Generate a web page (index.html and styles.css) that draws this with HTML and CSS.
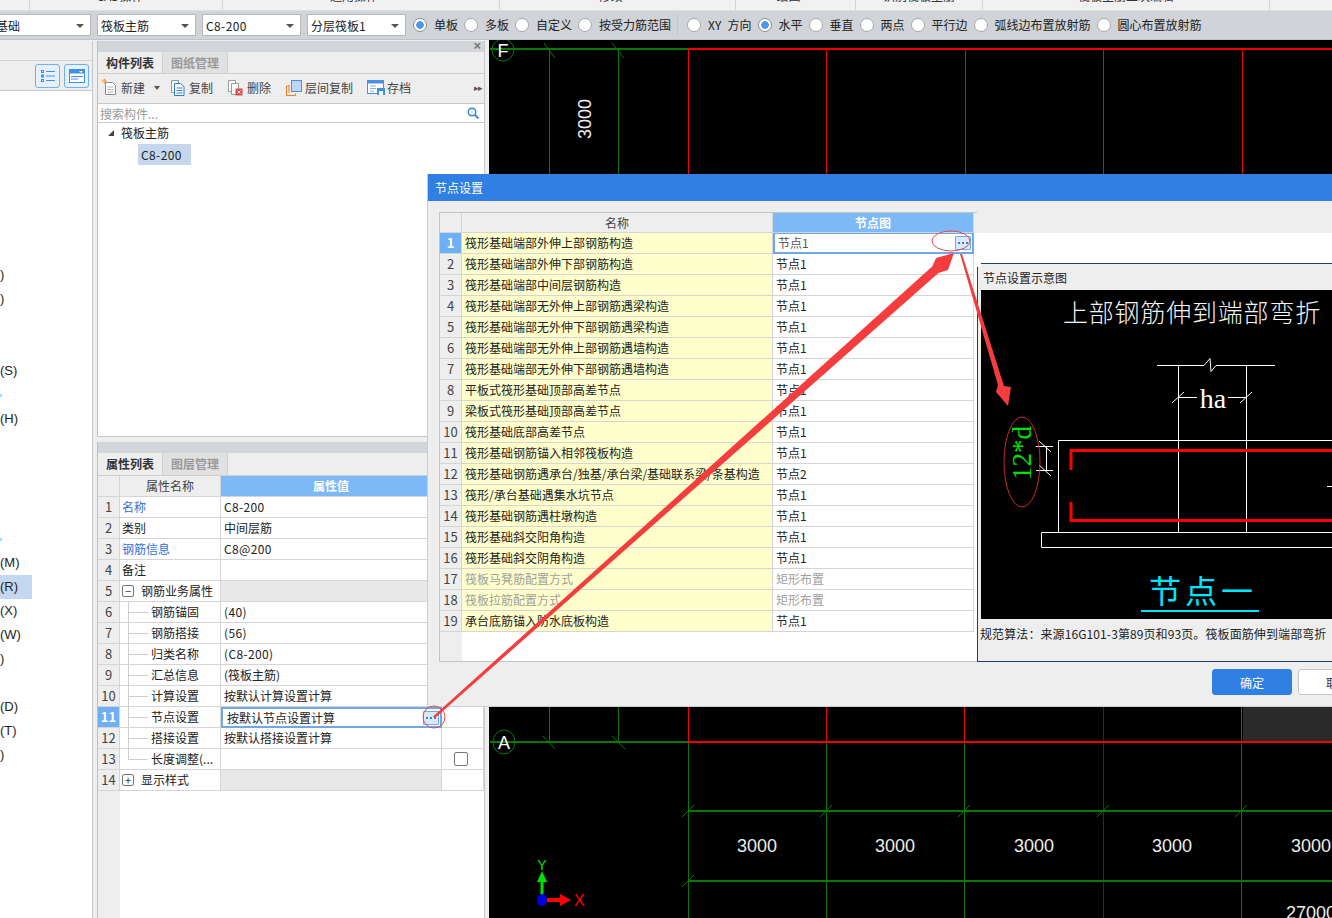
FILE: index.html
```html
<!DOCTYPE html>
<html lang="zh">
<head>
<meta charset="utf-8">
<title>节点设置</title>
<link rel="stylesheet" href="styles.css">
</head>
<body>
<div class="app">
  <div class="ribbon">
    <div class="rib rib-a">CAD操作</div>
    <div class="rib rib-b">通用操作</div>
    <div class="rib rib-c">修改</div>
    <div class="rib rib-d">绘图</div>
    <div class="rib rib-e">识别筏板主筋</div>
    <div class="rib rib-f">筏板主筋二次编辑</div>
    <div class="rib rib-g"></div>
  </div>

  <div class="toolbar">
    <div class="select sel-first">基础</div>
    <div class="select">筏板主筋</div>
    <div class="select sel-lt">C8-200</div>
    <div class="select">分层筏板1</div>
    <div class="radios">
      <div class="radio on">单板</div>
      <div class="radio">多板</div>
      <div class="radio">自定义</div>
      <div class="radio">按受力筋范围</div>
      <div class="vsep"></div>
      <div class="radio radio-xy">XY 方向</div>
      <div class="radio on">水平</div>
      <div class="radio">垂直</div>
      <div class="radio">两点</div>
      <div class="radio">平行边</div>
      <div class="radio">弧线边布置放射筋</div>
      <div class="radio">圆心布置放射筋</div>
    </div>
  </div>

  <div class="main">
    <aside class="left">
      <div class="left-head"></div>
      <div class="left-tools">
        <button class="view-btn"><svg width="14" height="14" viewBox="0 0 14 14"><g fill="none" stroke="#3f8fe6"><rect x="0.5" y="1.5" width="2" height="2"/><rect x="0.5" y="6" width="2" height="2"/><rect x="0.5" y="10.5" width="2" height="2"/><path d="M5 2.5h9M5 7h9M5 11.5h9"/></g></svg></button>
        <button class="view-btn"><svg width="16" height="14" viewBox="0 0 16 14"><rect x="0.5" y="0.5" width="15" height="13" fill="#fff" stroke="#3f8fe6"/><rect x="0.5" y="0.5" width="15" height="4" fill="#3f8fe6"/><path d="M2 7.5h12M2 10h7" stroke="#3f8fe6"/><path d="M10 2h4l-2 2z" fill="#fff"/></svg></button>
      </div>
      <div class="left-list">
        <div class="li"></div><div class="li"></div><div class="li"></div><div class="li"></div><div class="li"></div><div class="li"></div><div class="li"></div>
        <div class="li">)</div><div class="li">)</div><div class="li"></div><div class="li"></div>
        <div class="li">(S)</div><div class="li"><span class="dot"></span></div><div class="li">(H)</div>
        <div class="li"></div><div class="li"></div><div class="li"></div><div class="li"></div>
        <div class="li"><span class="dot"></span></div>
        <div class="li">(M)</div><div class="li sel">(R)</div><div class="li">(X)</div><div class="li">(W)</div><div class="li">)</div>
        <div class="li"></div><div class="li">(D)</div><div class="li">(T)</div><div class="li">)</div>
      </div>
    </aside>

    <section class="mid">
      <div class="panel panel-top">
        <div class="panel-title"><span class="close">×</span></div>
        <div class="tabs"><div class="tab active">构件列表</div><div class="tab">图纸管理</div></div>
        <div class="cmds">
          <div class="cmd cmd-new"><svg width="15" height="17" viewBox="0 0 15 17"><path d="M3.5 3.5h7l3 3v9h-10z" fill="#fff" stroke="#8c8c8c"/><path d="M5.5 8h6M5.5 10.5h6M5.5 13h6" stroke="#b5b5b5"/><path d="M0 2h5M2.5 0v5" stroke="#f28a1e" stroke-width="1.6" stroke-dasharray="1 .6"/></svg>新建<span class="caret"></span></div>
          <div class="cmd cmd-copy"><svg width="14" height="16" viewBox="0 0 14 16"><path d="M.5.5h7v12h-7z" fill="#fff" stroke="#7f9cbc"/><path d="M3.5 3.5h6l3.5 3v9H3.5z" fill="#fff" stroke="#2f79c9"/><path d="M5.5 8h6M5.5 10.5h6M5.5 13h6" stroke="#2f79c9"/></svg>复制</div>
          <div class="cmd cmd-del"><svg width="15" height="16" viewBox="0 0 15 16"><path d="M.5.5h7v11h-7z" fill="#fff" stroke="#999"/><path d="M3.5 3.5h7v11h-7z" fill="#fff" stroke="#999"/><rect x="7.5" y="8.5" width="7" height="7" fill="#e0494b"/><path d="M9.5 10.5l3 3M12.500 10.500l-3 3" stroke="#fff"/></svg>删除</div>
          <div class="cmd cmd-floor"><svg width="16" height="16" viewBox="0 0 16 16"><rect x="5.500" y=".5" width="10" height="11" fill="#bcd8f8" stroke="#4a90e2"/><path d="M.5 15.500V6h3M.5 15.500h9v-2M3 13V5" fill="none" stroke="#ee7d22"/></svg>层间复制</div>
          <div class="cmd cmd-save"><svg width="18" height="15" viewBox="0 0 18 15"><rect x=".5" y=".5" width="16" height="13" fill="#fff" stroke="#4a90e2"/><rect x=".5" y=".5" width="16" height="3" fill="#4a90e2"/><path d="M3 6h6M3 8.500h6M3 11h4" stroke="#7fb0e8"/><rect x="10" y="8" width="8" height="7" fill="#3f8fe6"/><rect x="12" y="11" width="4" height="4" fill="#fff"/></svg>存档</div>
          <span class="more">▸▸</span>
        </div>
        <div class="search"><span>搜索构件...</span><svg width="12" height="12" viewBox="0 0 12 12"><circle cx="5" cy="5" r="3.800" fill="none" stroke="#2f86d6" stroke-width="1.500"/><path d="M8 8l3.500 3.500" stroke="#2f86d6" stroke-width="1.800"/></svg></div>
        <div class="tree">
          <div class="tree-root"><span class="tri"></span>筏板主筋</div>
          <div class="tree-leaf">C8-200</div>
        </div>
      </div>

      <div class="panel panel-bottom">
        <div class="panel-title"></div>
        <div class="tabs tabs-tall"><div class="tab active">属性列表</div><div class="tab">图层管理</div></div>
        <div class="ptable">
          <div class="pr phead"><div class="c n"></div><div class="c hn">属性名称</div><div class="c hv">属性值</div><div class="c x"></div></div>
          <div class="pr"><div class="c n">1</div><div class="c name link">名称</div><div class="c lt">C8-200</div><div class="c x"></div></div>
          <div class="pr"><div class="c n">2</div><div class="c name">类别</div><div class="c">中间层筋</div><div class="c x"></div></div>
          <div class="pr"><div class="c n">3</div><div class="c name link">钢筋信息</div><div class="c lt">C8@200</div><div class="c x"></div></div>
          <div class="pr"><div class="c n">4</div><div class="c name">备注</div><div class="c"></div><div class="c x"></div></div>
          <div class="pr"><div class="c n">5</div><div class="c name grp"><span class="box">−</span>钢筋业务属性</div><div class="c shade"></div><div class="c x shade"></div></div>
          <div class="pr"><div class="c n">6</div><div class="c name child">钢筋锚固</div><div class="c lt">(40)</div><div class="c x"></div></div>
          <div class="pr"><div class="c n">7</div><div class="c name child">钢筋搭接</div><div class="c lt">(56)</div><div class="c x"></div></div>
          <div class="pr"><div class="c n">8</div><div class="c name child">归类名称</div><div class="c lt">(C8-200)</div><div class="c x"></div></div>
          <div class="pr"><div class="c n">9</div><div class="c name child">汇总信息</div><div class="c">(筏板主筋)</div><div class="c x"></div></div>
          <div class="pr"><div class="c n">10</div><div class="c name child">计算设置</div><div class="c">按默认计算设置计算</div><div class="c x"></div></div>
          <div class="pr"><div class="c n cur">11</div><div class="c name child">节点设置</div><div class="c edit">按默认节点设置计算<span class="dots"></span></div><div class="c x"></div></div>
          <div class="pr"><div class="c n">12</div><div class="c name child">搭接设置</div><div class="c">按默认搭接设置计算</div><div class="c x"></div></div>
          <div class="pr"><div class="c n">13</div><div class="c name child last">长度调整(...</div><div class="c"></div><div class="c x"><span class="check"></span></div></div>
          <div class="pr"><div class="c n">14</div><div class="c name grp"><span class="box">+</span>显示样式</div><div class="c shade"></div><div class="c x"></div></div>
          <div class="pblank"><div class="n-fill"></div></div>
        </div>
      </div>
    </section>

    <section class="canvas">
      <svg class="cad" width="843" height="878" viewBox="489 40 843 878">
        <g class="g-line">
          <path d="M549.500 49V174M618.500 49V174M544 43l11 15M612 43l12 15"/>
          <path d="M549.500 707V742M618.500 707V742M543 736l12 13M612 736l13 13"/>
          <path d="M688.500 742V918M826.500 742V918M964.500 742V918M1241.500 742V918"/>
          <path class="faint" d="M1103.500 742V918"/>
          <path class="thick" d="M490 49H688M490 742H688M688 811H1332M688 881H1332"/>
          <path d="M682 817l12-12M820 817l12-12M958 817l12-12M1097 817l12-12M1235 817l12-12M682 887l12-12"/>
          <circle cx="503" cy="50" r="11"/><ellipse cx="504" cy="742" rx="11" ry="12"/>
        </g>
        <g class="r-line">
          <path class="thick" d="M688 49H1332M688 742H1332"/>
          <path d="M688.500 49V174M826.500 49V174M965.500 49V174M1103.500 49V174M1242.500 49V174"/>
          <path d="M688.500 707V742M826.500 707V742M964.500 707V742M1241.500 707V742"/>
          <path class="faint" d="M1103.500 707V742"/>
        </g>
        <rect x="1243" y="707" width="89" height="34" fill="#2a2a2a"/>
        <text class="lab" x="503" y="57" text-anchor="middle">F</text>
        <text class="lab" x="504" y="749" text-anchor="middle">A</text>
        <text class="dim" x="0" y="0" transform="translate(591 119) rotate(-90)" text-anchor="middle">3000</text>
        <text class="dim" x="757" y="852" text-anchor="middle">3000</text>
        <text class="dim" x="895" y="852" text-anchor="middle">3000</text>
        <text class="dim" x="1034" y="852" text-anchor="middle">3000</text>
        <text class="dim" x="1172" y="852" text-anchor="middle">3000</text>
        <text class="dim" x="1311" y="852" text-anchor="middle">3000</text>
        <text class="dim" x="1286" y="919">27000</text>
        <path d="M542 900V880" stroke="#00e000" stroke-width="3"/>
        <path d="M542 871l-5 11h10z" fill="#00e000"/>
        <path d="M547 900h13" stroke="#f00" stroke-width="4"/>
        <path d="M571 900l-11-6v12z" fill="#f00"/>
        <ellipse cx="542" cy="900" rx="5" ry="6" fill="#0000e0"/>
        <text class="axis-y" x="542" y="870" text-anchor="middle">Y</text>
        <text class="axis-x" x="574" y="906">X</text>
      </svg>
    </section>
  </div>

  <div class="dialog">
    <div class="d-title">节点设置</div>
    <div class="d-body">
      <div class="d-main">
        <div class="ntable">
          <div class="nr nhead"><div class="c n"></div><div class="c hn">名称</div><div class="c hv">节点图</div><div class="hfill"></div></div>
          <div class="nr"><div class="c n cur">1</div><div class="c y">筏形基础端部外伸上部钢筋构造</div><div class="c edit2">节点1<span class="dots"></span></div></div>
          <div class="nr"><div class="c n">2</div><div class="c y">筏形基础端部外伸下部钢筋构造</div><div class="c">节点1</div></div>
          <div class="nr"><div class="c n">3</div><div class="c y">筏形基础端部中间层钢筋构造</div><div class="c">节点1</div></div>
          <div class="nr"><div class="c n">4</div><div class="c y">筏形基础端部无外伸上部钢筋遇梁构造</div><div class="c">节点1</div></div>
          <div class="nr"><div class="c n">5</div><div class="c y">筏形基础端部无外伸下部钢筋遇梁构造</div><div class="c">节点1</div></div>
          <div class="nr"><div class="c n">6</div><div class="c y">筏形基础端部无外伸上部钢筋遇墙构造</div><div class="c">节点1</div></div>
          <div class="nr"><div class="c n">7</div><div class="c y">筏形基础端部无外伸下部钢筋遇墙构造</div><div class="c">节点1</div></div>
          <div class="nr"><div class="c n">8</div><div class="c y">平板式筏形基础顶部高差节点</div><div class="c">节点1</div></div>
          <div class="nr"><div class="c n">9</div><div class="c y">梁板式筏形基础顶部高差节点</div><div class="c">节点1</div></div>
          <div class="nr"><div class="c n">10</div><div class="c y">筏形基础底部高差节点</div><div class="c">节点1</div></div>
          <div class="nr"><div class="c n">11</div><div class="c y">筏形基础钢筋锚入相邻筏板构造</div><div class="c">节点1</div></div>
          <div class="nr"><div class="c n">12</div><div class="c y">筏形基础钢筋遇承台/独基/承台梁/基础联系梁/条基构造</div><div class="c">节点2</div></div>
          <div class="nr"><div class="c n">13</div><div class="c y">筏形/承台基础遇集水坑节点</div><div class="c">节点1</div></div>
          <div class="nr"><div class="c n">14</div><div class="c y">筏形基础钢筋遇柱墩构造</div><div class="c">节点1</div></div>
          <div class="nr"><div class="c n">15</div><div class="c y">筏形基础斜交阳角构造</div><div class="c">节点1</div></div>
          <div class="nr"><div class="c n">16</div><div class="c y">筏形基础斜交阴角构造</div><div class="c">节点1</div></div>
          <div class="nr off"><div class="c n">17</div><div class="c y">筏板马凳筋配置方式</div><div class="c">矩形布置</div></div>
          <div class="nr off"><div class="c n">18</div><div class="c y">筏板拉筋配置方式</div><div class="c">矩形布置</div></div>
          <div class="nr"><div class="c n">19</div><div class="c y">承台底筋锚入防水底板构造</div><div class="c">节点1</div></div>
          <div class="nblank"><div class="n-fill"></div></div>
        </div>
        <div class="d-right">
          <div class="strip"></div>
          <div class="white"></div>
          <div class="topline"></div>
          <div class="gbox">
            <div class="gtitle">节点设置示意图</div>
            <svg class="pic" width="351" height="329" viewBox="981 290 351 329">
              <rect x="981" y="290" width="351" height="329" fill="#000"/>
              <text class="p-title" x="1063" y="322">上部钢筋伸到端部弯折</text>
              <g class="w-line">
                <path d="M1157 365.500H1204l6-7 1 13 5-6h59"/>
                <path d="M1178.500 365V532M1246.500 365V532"/>
                <path d="M1178 397.500h19M1228 397.500h18M1172 403l12-11M1240 403l12-11"/>
                <path d="M1058.500 532V440.500H1332M1041.500 532.500H1332M1041.500 532.500v15H1332"/>
                <path d="M1036 446.500h17M1036 470.500h17M1046.500 446v24M1039 441l12 11M1039 465l12 11M1327 486.500h5"/>
              </g>
              <text class="p-ha" x="1213" y="408" text-anchor="middle">ha</text>
              <path class="rebar" d="M1071 470V450.500H1332M1071 502V520.500H1332"/>
              <text class="p-d" transform="translate(1031 480) rotate(-90)">12*d</text>
              <text class="p-node" x="1149" y="603">节点一</text>
              <rect x="1141" y="610" width="118" height="2" fill="#00e5ff"/>
            </svg>
            <div class="gnote">规范算法：来源16G101-3第89页和93页。筏板面筋伸到端部弯折</div>
          </div>
        </div>
      </div>
      <div class="d-foot"><button class="btn primary">确定</button><button class="btn">取消</button></div>
    </div>
  </div>

  <svg class="marks" width="1332" height="918" viewBox="0 0 1332 918">
    <g fill="#f53d3d">
      <path d="M433 716.500L932.400 266.300 936 258 954 253 948 270 938.400 273 435 718z"/>
      <path d="M960 254L998 385 996 392 1008 406 1011 387 1004 386 962 254z"/>
    </g>
    <g fill="none" stroke="#e8474a">
      <ellipse cx="951" cy="241" rx="19" ry="10"/>
      <circle cx="434" cy="717" r="11"/>
    </g>
    <ellipse cx="1022" cy="462" rx="18" ry="45" fill="none" stroke="#c52b2b"/>
  </svg>
</div>
</body>
</html>
```

FILE: styles.css
```css
*, *::before, *::after { box-sizing: border-box; }
html, body { margin: 0; padding: 0; }
body {
  font-family: "Noto Sans CJK SC", "Liberation Sans", sans-serif;
  font-size: 12px;
  color: #222;
  background: #eee;
}
.app {
  position: relative;
  width: 1332px;
  height: 918px;
  overflow: hidden;
  display: flex;
  flex-direction: column;
  background: #eee;
}

/* ribbon */
.ribbon {
  height: 11px;
  display: flex;
  background: #f1f1f1;
  border-bottom: 1px solid #dcdfe2;
  flex: none;
}
.rib {
  height: 10px;
  overflow: hidden;
  display: flex;
  align-items: flex-end;
  justify-content: center;
  padding-bottom: 5px;
  border-right: 1px solid #d4d4d4;
  font-size: 12px;
  line-height: 18px;
  color: #333;
  flex: none;
}
.rib-a { width: 194px; margin-left: 29px; border-left: 1px solid #d4d4d4; padding-right: 12px; }
.rib-b { width: 277px; padding-right: 14px; }
.rib-c { width: 236px; padding-right: 14px; }
.rib-d { width: 120px; padding-right: 14px; }
.rib-e { width: 127px; }
.rib-f { width: 287px; }
.rib-g { width: 62px; border-right: 0; }

/* toolbar */
.toolbar {
  height: 29px;
  flex: none;
  display: flex;
  align-items: center;
  gap: 6px;
  background: #d0d3d7;
  border-bottom: 1px solid #c0c3c7;
  padding-bottom: 1px;
}
.select {
  position: relative;
  width: 99px;
  height: 22px;
  background: #fff;
  border: 1px solid #b8b8b8;
  padding-left: 3px;
  line-height: 21px;
  white-space: nowrap;
  overflow: hidden;
}
.select::after {
  content: "";
  position: absolute;
  right: 6px;
  top: 9px;
  border: 4px solid transparent;
  border-top: 4px solid #555;
  border-bottom: 0;
}
.sel-first { margin-left: -11px; width: 102px; text-indent: 3px; }
.sel-lt { letter-spacing: .4px; }
.radios {
  display: flex;
  align-items: center;
  gap: 6px;
  margin-left: 1px;
}
.radio {
  display: flex;
  align-items: center;
  gap: 7px;
  white-space: nowrap;
  line-height: 16px;
}
.radio-xy { word-spacing: 3.500px; }
.radio::before {
  content: "";
  width: 14px;
  height: 14px;
  border-radius: 50%;
  background: #fff;
  border: 1px solid #a9a9a9;
  flex: none;
}
.radio.on::before {
  background: radial-gradient(circle, #4a97f2 0 3.500px, #fff 4px);
  border-color: #8e8e8e;
}
.vsep { width: 1px; height: 20px; background: #c2c5c9; margin: 0 3px 0 0; }

/* main */
.main { flex: 1; display: flex; min-height: 0; }
.left {
  width: 93px;
  flex: none;
  display: flex;
  flex-direction: column;
  border-right: 1px solid #c8c8c8;
  margin-top: 1px;
}
.left-head { height: 20px; background: #eee; border-bottom: 1px solid #d4d4d4; flex: none; }
.left-tools {
  height: 30px;
  display: flex;
  justify-content: flex-end;
  gap: 4px;
  padding: 3px 3px 0 0;
  border-bottom: 1px solid #c9c9c9;
  flex: none;
}
.view-btn {
  width: 25px;
  height: 24px;
  padding: 0;
  background: #e7f1fd;
  border: 1px solid #6fb0f0;
  border-radius: 3px;
  display: flex;
  align-items: center;
  justify-content: center;
}
.left-list { flex: 1; background: #fff; padding-top: 4px; font-size: 13px; font-family: "Liberation Sans", sans-serif; }
.li { height: 24px; line-height: 24px; width: 91px; display: flow-root; }
.li.sel { background: #c5d7ef; width: 32px; }
.dot { display: block; width: 2px; height: 3px; margin-top: 11px; background: #8fe8f4; }

.mid {
  width: 388px;
  flex: none;
  margin-left: 4px;
  display: flex;
  flex-direction: column;
  gap: 5px;
  margin-top: 1px;
}
.panel {
  border-left: 1px solid #c0c0c0;
  border-right: 1px solid #c8c8c8;
  background: #fff;
  display: flex;
  flex-direction: column;
}
.panel-top { height: 396px; border-bottom: 1px solid #c8c8c8; flex: none; }
.panel-bottom { flex: 1; min-height: 0; }
.panel-title {
  height: 11px;
  flex: none;
  background: #d2d5da;
  position: relative;
}
.close {
  position: absolute;
  right: 3px;
  top: -2px;
  font-size: 13px;
  line-height: 14px;
  color: #777;
  font-family: "Liberation Sans", sans-serif;
  font-weight: bold;
}
.tabs {
  height: 22px;
  flex: none;
  display: flex;
  background: #eee;
  border-bottom: 1px solid #cfcfcf;
}
.tabs-tall { height: 23px; }
.tab {
  width: 65px;
  text-align: center;
  line-height: 21px;
  color: #999;
  background: #e1e1e1;
  border-right: 1px solid #cfcfcf;
  font-weight: bold;
}
.tab.active { background: #eee; color: #333; }
.cmds {
  height: 30px;
  flex: none;
  position: relative;
  display: flex;
  align-items: center;
  background: #eee;
  border-bottom: 1px solid #c8c8c8;
  padding: 0 0 2px 4px;
  color: #444;
}
.cmd { display: flex; align-items: center; gap: 4px; flex: none; white-space: nowrap; }
.cmd-new { width: 69px; }
.cmd-copy { width: 57px; }
.cmd-del { width: 58px; }
.cmd-floor { width: 81px; gap: 3px; }
.cmd-save { gap: 2px; }
.caret {
  margin-left: 5px;
  border: 3px solid transparent;
  border-top: 4px solid #555;
  border-bottom: 0;
}
.more { position: absolute; right: 2px; font-size: 9px; color: #555; letter-spacing: -1px; }
.search {
  height: 19px;
  flex: none;
  display: flex;
  align-items: center;
  justify-content: space-between;
  padding: 0 5px 0 2px;
  color: #999;
  border-bottom: 1px solid #c8c8c8;
}
.tree { flex: 1; color: #222; }
.tree-root { height: 21px; line-height: 19px; padding-left: 23px; position: relative; }
.tri {
  position: absolute;
  left: 10px;
  top: 7px;
  border-left: 6px solid transparent;
  border-bottom: 6px solid #444;
}
.tree-leaf {
  margin-left: 40px;
  width: 53px;
  height: 21px;
  line-height: 21px;
  padding-left: 3px;
  letter-spacing: .4px;
  background: #c5d7ef;
}

/* shared grid cells */
.c {
  border-right: 1px solid #d5d5d5;
  border-bottom: 1px solid #d5d5d5;
  padding-left: 3px;
  line-height: 20px;
  white-space: nowrap;
  overflow: hidden;
  position: relative;
}
.c.lt { letter-spacing: .35px; }
.c.n {
  background: #eee;
  text-align: center;
  padding: 0;
  color: #444;
  font-size: 13px;
}
.c.n.cur { background: #6fb0f5; color: #fff; font-weight: bold; }
.c.hn { background: #eee; text-align: center; color: #444; padding: 0; }
.c.hv { background: #7db8f7; text-align: center; color: #fff; font-weight: bold; padding: 0; }
.dots {
  position: absolute;
  width: 16px;
  height: 14px;
  background: #d9e9fc;
  border: 1px solid #6fa8ea;
  border-radius: 1px;
}
.dots::before {
  content: "";
  position: absolute;
  left: 6px;
  top: 5px;
  width: 2px;
  height: 2px;
  background: #3f7fcf;
  box-shadow: -4px 0 0 #3f7fcf, 4px 0 0 #3f7fcf;
}

/* property table */
.ptable { flex: 1; display: flex; flex-direction: column; min-height: 0; }
.pr {
  display: grid;
  grid-template-columns: 22px 101px 221px 42px;
  height: 21px;
  flex: none;
}
.c.name { padding-left: 2px; }
.c.link { color: #2f6fe0; }
.c.grp { padding-left: 21px; }
.c.child { padding-left: 31px; }
.c.child::before {
  content: "";
  position: absolute;
  left: 8px;
  top: 0;
  bottom: 0;
  width: 1px;
  background: #cfcfcf;
}
.c.child::after {
  content: "";
  position: absolute;
  left: 8px;
  top: 10px;
  width: 20px;
  height: 1px;
  background: #cfcfcf;
}
.c.child.last::before { bottom: 10px; }
.box {
  position: absolute;
  left: 2px;
  top: 4px;
  width: 12px;
  height: 12px;
  border: 1px solid #777;
  border-radius: 2px;
  font-size: 11px;
  line-height: 10px;
  text-align: center;
  color: #333;
}
.shade { background: #e8e8e8; }
.edit { border: 2px solid #6fa8ea; padding-left: 4px; line-height: 17px; }
.edit .dots { right: 1px; top: 2px; }
.check {
  position: absolute;
  left: 12px;
  top: 3px;
  width: 14px;
  height: 14px;
  border: 1px solid #777;
  border-radius: 2px;
  background: #fff;
}
.pblank { flex: 1; }
.n-fill { width: 22px; height: 100%; background: #eee; }

/* dialog */
.dialog {
  position: absolute;
  left: 427px;
  top: 174px;
  width: 960px;
  height: 533px;
  background: #eee;
  border-left: 1px solid #c8cdd8;
  border-bottom: 1px solid #c8cdd8;
  display: flex;
  flex-direction: column;
}
.d-title {
  height: 27px;
  flex: none;
  background: #2f80e2;
  color: #fff;
  line-height: 27px;
  padding-left: 7px;
  font-size: 12px;
}
.d-body { flex: 1; padding: 11px 0 0 11px; display: flex; flex-direction: column; }
.d-main { display: flex; height: 450px; flex: none; }
.ntable {
  width: 538px;
  flex: none;
  background: #fff;
  border: 1px solid #c4c4c4;
  border-right: 0;
  display: flex;
  flex-direction: column;
}
.nr {
  display: grid;
  grid-template-columns: 22px 311px 201px;
  height: 21px;
  flex: none;
}
.nhead { height: 20px; grid-template-columns: 22px 311px 201px 3px; background: #eee; }
.hfill { background: #eee; }
.nhead .c { line-height: 19px; }
.c.y { background: #ffffcb; padding-left: 3px; }
.off .c { color: #a0a0a0; }
.off .c.n { color: #444; }
.edit2 { border: 2px solid #6fa8ea; border-top-width: 1px; padding-left: 3px; line-height: 18px; color: #555; }
.edit2 .dots { right: 1px; top: 2px; }
.nblank { flex: 1; }
.d-right { flex: 1; background: #fff; display: flex; flex-direction: column; min-width: 0; }
.strip { height: 21px; background: #eee; flex: none; }
.white { height: 30px; flex: none; }
.topline { height: 4px; margin-left: 4px; border-top: 1px solid #1f3f70; background: #eee; flex: none; }
.gbox {
  flex: 1;
  background: #eee;
  border-left: 1px solid #1f3f70;
  border-bottom: 1px solid #1f3f70;
  padding-left: 3px;
  display: flex;
  flex-direction: column;
}
.gtitle { height: 23px; line-height: 22px; padding-left: 2px; color: #222; flex: none; }
.pic { display: block; flex: none; }
.gnote { margin-left: -1px; line-height: 30px; white-space: nowrap; color: #222; letter-spacing: .1px; }
.d-foot { display: flex; gap: 6px; padding: 7px 0 0 773px; }
.btn {
  width: 80px;
  height: 26px;
  padding: 0;
  font: inherit;
  background: #fff;
  border: 1px solid #c8c8c8;
  border-radius: 3px;
  color: #333;
}
.btn.primary { background: #2f80e2; border-color: #2f80e2; color: #fff; }

/* drawing */
.canvas { flex: 1; margin-left: 4px; background: #000; min-width: 0; overflow: hidden; }
.cad { display: block; }
.g-line { fill: none; stroke: #087808; }
.r-line { fill: none; stroke: #f00000; }
.thick { stroke-width: 2; }
.faint { opacity: .6; }
.lab { font: 18px "Liberation Sans", sans-serif; fill: #fff; }
.dim { font: 18px "Liberation Sans", sans-serif; fill: #eee; }
.axis-y { font: 14px "Liberation Sans", sans-serif; fill: #00e000; }
.axis-x { font: 16px "Liberation Sans", sans-serif; fill: #f00; }
.w-line { fill: none; stroke: #fff; }
.rebar { fill: none; stroke: #f00; stroke-width: 3; }
.p-title { font: 300 25px "Noto Sans CJK SC", sans-serif; letter-spacing: .8px; fill: #f4f4f4; }
.p-ha { font: 28px "Liberation Serif", serif; fill: #fff; }
.p-d { font: 27px "Liberation Serif", serif; fill: #00e000; }
.p-node { font: 32px "Noto Sans CJK SC", sans-serif; letter-spacing: 4px; fill: #00e5ff; }
.marks { position: absolute; left: 0; top: 0; pointer-events: none; }
```
